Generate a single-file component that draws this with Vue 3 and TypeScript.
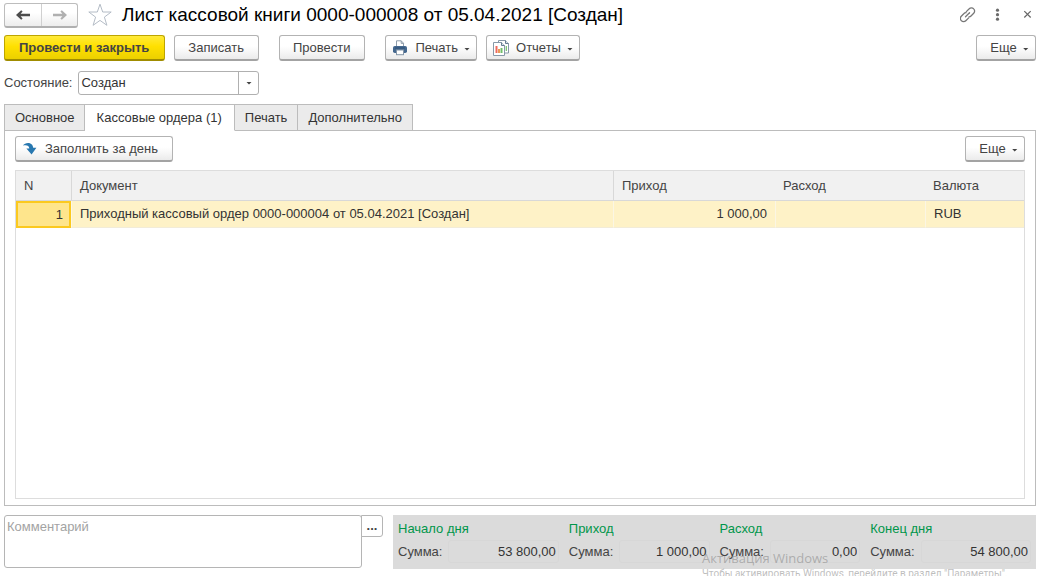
<script setup lang="ts">
import { ref } from 'vue'

interface Order {
  n: number
  document: string
  income: string
  expense: string
  currency: string
}

interface Total {
  id: string
  title: string
  amount: string
}

const tabs: string[] = ['Основное', 'Кассовые ордера (1)', 'Печать', 'Дополнительно']
const activeTab = ref(1)
const state = ref('Создан')
const comment = ref('')

const orders: Order[] = [
  {
    n: 1,
    document: 'Приходный кассовый ордер 0000-000004 от 05.04.2021 [Создан]',
    income: '1 000,00',
    expense: '',
    currency: 'RUB',
  },
]

const totals: Total[] = [
  { id: 'opening', title: 'Начало дня', amount: '53 800,00' },
  { id: 'income', title: 'Приход', amount: '1 000,00' },
  { id: 'expense', title: 'Расход', amount: '0,00' },
  { id: 'closing', title: 'Конец дня', amount: '54 800,00' },
]
</script>

<template>
  <div class="window">
    <header class="titlebar">
      <div class="nav">
        <button type="button" class="nav-btn" aria-label="Назад">
          <svg width="16" height="12" viewBox="0 0 16 12"><path d="M1 6 6.2 1.2 7.6 2.4 5.6 4.7H15V7.3H5.6L7.6 9.6 6.2 10.8z" fill="#4c4c4c" /></svg>
        </button>
        <button type="button" class="nav-btn" aria-label="Вперед">
          <svg width="16" height="12" viewBox="0 0 16 12"><path d="M15 6 9.8 1.2 8.4 2.4 10.4 4.8H1V7.2H10.4L8.4 9.6 9.8 10.8z" fill="#b0b0b0" /></svg>
        </button>
      </div>
      <button type="button" class="plain star" aria-label="Избранное">
        <svg width="24" height="24" viewBox="0 0 24 24"><path d="M12 1.2 14.7 9h8.5l-6.8 5.1 2.5 8.2L12 17.4l-6.9 4.9 2.5-8.2L.8 9h8.5z" fill="#fff" stroke="#b4bcc6" stroke-width="1" /></svg>
      </button>
      <h1>Лист кассовой книги 0000-000008 от 05.04.2021 [Создан]</h1>
      <div class="window-tools">
        <button type="button" class="plain" aria-label="Получить ссылку">
          <svg width="16" height="16" viewBox="0 0 16 16" fill="none" stroke="#777" stroke-width="1.3" stroke-linecap="round">
            <path d="M6.3 4.6 9.2 1.8a3.1 3.1 0 0 1 4.5.1 3.1 3.1 0 0 1 0 4.4L11 9a2.6 2.6 0 0 1-2 .8" />
            <path d="M8.7 10.9 5.8 13.700a3.1 3.1 0 0 1-4.500-.1 3.100 3.100 0 0 1 0-4.400L4 6.500a2.600 2.600 0 0 1 2-.8" />
            <path d="M5.500 9.700l4-4" />
          </svg>
        </button>
        <button type="button" class="plain" aria-label="Меню">
          <svg width="16" height="16" viewBox="0 0 16 16" fill="#6a6a6a"><circle cx="7.5" cy="3.2" r="1.6" /><circle cx="7.5" cy="7.700" r="1.6" /><circle cx="7.5" cy="12.2" r="1.6" /></svg>
        </button>
        <button type="button" class="plain" aria-label="Закрыть">
          <svg width="16" height="16" viewBox="0 0 16 16"><path d="M4.3 4.1l6.4 6.4M10.7 4.1l-6.4 6.4" stroke="#666" stroke-width="1.2" /></svg>
        </button>
      </div>
    </header>

    <div class="toolbar">
      <button type="button" class="btn primary">Провести и закрыть</button>
      <button type="button" class="btn">Записать</button>
      <button type="button" class="btn spaced">Провести</button>
      <button type="button" class="btn spaced with-icon">
        <svg width="16" height="16" viewBox="0 0 16 16">
          <path d="M4.5 7V.8h4.7l2.3 2.4V7" fill="#fff" stroke="#8f9dab" />
          <path d="M9.2.8v2.6h2.3" fill="none" stroke="#8f9dab" />
          <rect x="1" y="6" width="14" height="7" rx="1.8" fill="#44688f" />
          <path d="M3 8h10" stroke="#2d4e75" />
          <rect x="4.5" y="10" width="7" height="4.7" fill="#fff" stroke="#8496a8" />
        </svg>
        <span>Печать</span><i class="caret"></i>
      </button>
      <button type="button" class="btn with-icon">
        <svg width="16" height="16" viewBox="0 0 16 16">
          <path d="M5.5.5h7l3 3v9.5h-10z" fill="#fff" stroke="#8798a8" />
          <path d="M12.5.5v3h3" fill="#dce4eb" stroke="#667d91" />
          <path d="M.5 2.5h8l3 3v10H.5z" fill="#fff" stroke="#8798a8" />
          <path d="M8.5 2.5v3h3" fill="#dce4eb" stroke="#667d91" />
          <path d="M2.5 6h2v7h-2z" fill="#ee6a5e" />
          <path d="M5 9h2v4H5z" fill="#e89a58" />
          <path d="M7.5 8h2v5h-2zM12.7 6h1.2v5h-1.2z" fill="#72bf6a" />
        </svg>
        <span>Отчеты</span><i class="caret"></i>
      </button>
      <button type="button" class="btn more"><span>Еще</span><i class="caret"></i></button>
    </div>

    <div class="state-row">
      <label for="state">Состояние:</label>
      <div class="select-box">
        <select id="state" v-model="state">
          <option>Создан</option>
        </select>
        <span class="select-arrow"><i class="caret"></i></span>
      </div>
    </div>

    <div class="tabs" role="tablist">
      <button
        v-for="(tab, i) in tabs"
        :key="tab"
        type="button"
        role="tab"
        class="tab"
        :class="{ active: i === activeTab }"
        :aria-selected="i === activeTab"
        @click="activeTab = i"
      >{{ tab }}</button>
    </div>

    <main class="panel">
      <div class="panel-tools">
        <button type="button" class="btn with-icon">
          <svg width="16" height="16" viewBox="0 0 16 16"><path d="M1 4.6C2.8.9 10.8.4 11.2 6.7H14.4L9.6 13.4 4.4 7.6h2.9C7.4 4.4 4 3.6 1 4.6z" fill="#2878b0" /></svg>
          <span>Заполнить за день</span>
        </button>
        <button type="button" class="btn more"><span>Еще</span><i class="caret"></i></button>
      </div>
      <div class="grid">
        <table>
          <colgroup>
            <col class="c-n" /><col /><col class="c-income" /><col class="c-expense" /><col class="c-currency" />
          </colgroup>
          <thead>
            <tr><th>N</th><th>Документ</th><th>Приход</th><th>Расход</th><th>Валюта</th></tr>
          </thead>
          <tbody>
            <tr v-for="o in orders" :key="o.n">
              <td class="num current">{{ o.n }}</td>
              <td>{{ o.document }}</td>
              <td class="num">{{ o.income }}</td>
              <td class="num">{{ o.expense }}</td>
              <td>{{ o.currency }}</td>
            </tr>
          </tbody>
        </table>
      </div>
    </main>

    <footer class="bottom">
      <div class="comment">
        <textarea v-model="comment" placeholder="Комментарий" aria-label="Комментарий"></textarea>
        <button type="button" class="dots" aria-label="Открыть комментарий">...</button>
      </div>
      <div class="totals">
        <section v-for="t in totals" :key="t.id" class="total">
          <h2>{{ t.title }}</h2>
          <div class="total-line">
            <label :for="t.id">Сумма:</label>
            <input :id="t.id" type="text" :value="t.amount" readonly />
          </div>
        </section>
      </div>
    </footer>

    <div class="watermark">
      <p class="wm-title">Активация Windows</p>
      <p class="wm-text">Чтобы активировать Windows, перейдите в раздел "Параметры".</p>
    </div>
  </div>
</template>

<style>
body {
  margin: 0;
  background: #fff;
}
</style>

<style scoped>
.window {
  position: relative;
  box-sizing: border-box;
  display: flex;
  flex-direction: column;
  height: 100vh;
  padding: 2px 8px 8px 4px;
  overflow: hidden;
  background: #fff;
  color: #444;
  font: 13px/16px "Liberation Sans", Arial, sans-serif;
}
.window * {
  box-sizing: border-box;
}
button,
input,
select,
textarea {
  font: inherit;
  color: inherit;
  margin: 0;
}
.titlebar {
  display: flex;
  align-items: center;
  height: 26px;
  flex: none;
}
.nav {
  display: flex;
  height: 25px;
  border: 1px solid #bdbdbd;
  border-bottom: 2px solid #b0b0b0;
  border-radius: 3px;
  background: linear-gradient(#fff 40%, #ededed);
}
.nav-btn {
  display: flex;
  align-items: center;
  justify-content: center;
  width: 36px;
  padding: 0;
  border: 0;
  background: none;
}
.nav-btn + .nav-btn {
  border-left: 1px solid #d0d0d0;
}
.plain {
  display: flex;
  padding: 0;
  border: 0;
  background: none;
}
.star {
  margin: 0 10px;
}
h1 {
  flex: 1;
  margin: 0;
  font-size: 19px;
  line-height: 24px;
  font-weight: 400;
  color: #000;
  white-space: nowrap;
}
.window-tools {
  display: flex;
  gap: 14px;
}
.toolbar {
  display: flex;
  flex: none;
  gap: 9px;
  margin-top: 7px;
}
.btn {
  display: flex;
  align-items: center;
  justify-content: center;
  height: 26px;
  padding: 0 14px 0 13px;
  border: 1px solid #b3b3b3;
  border-bottom: 2px solid #a3a3a3;
  border-radius: 3px;
  background: linear-gradient(#fff 45%, #ebebeb);
  white-space: nowrap;
}
.btn.primary {
  padding: 0 15px 0 14px;
  border-color: #bda500;
  border-bottom-color: #a08c00;
  background: linear-gradient(#ffea3a, #ffe000 45%, #ecd000);
  font-weight: 700;
}
.btn.spaced {
  margin-left: 11px;
}
.btn.with-icon {
  padding: 0 6px;
}
.btn.with-icon span {
  margin-left: 7px;
}
.btn.more {
  margin-left: auto;
  width: 60px;
  padding: 0 6px 0 13px;
}
.caret {
  flex: none;
  width: 6px;
  height: 3px;
  margin-top: 3px;
  margin-left: 6px;
  background: #444;
  clip-path: polygon(0 0, 100% 0, 50% 100%);
}
.state-row {
  display: flex;
  flex: none;
  align-items: center;
  gap: 6px;
  margin-top: 10px;
}
.select-box {
  position: relative;
  width: 181px;
  height: 24px;
}
select {
  width: 100%;
  height: 100%;
  padding: 0 24px 0 2px;
  border: 1px solid #b0b0b0;
  border-radius: 3px;
  background: #fff;
  color: #333;
  appearance: none;
}
.select-arrow {
  position: absolute;
  top: 1px;
  right: 1px;
  bottom: 1px;
  display: flex;
  align-items: center;
  justify-content: center;
  width: 20px;
  border-left: 1px solid #b0b0b0;
  pointer-events: none;
}
.select-arrow .caret {
  margin: 0;
}
.tabs {
  position: relative;
  display: flex;
  flex: none;
  margin-top: 9px;
}
.tab {
  height: 27px;
  margin-bottom: -1px;
  padding: 0 10px;
  border: 1px solid #bcbcbc;
  border-left: 0;
  background: #ebebeb;
  color: #333;
}
.tab:first-child {
  padding-right: 9px;
  border-left: 1px solid #bcbcbc;
}
.tab.active {
  padding: 0 12px;
  border-bottom-color: #fff;
  background: #fff;
}
.panel {
  display: flex;
  flex: 1;
  flex-direction: column;
  min-height: 0;
  padding: 5px 10px 6px;
  border: 1px solid #bcbcbc;
}
.panel-tools {
  display: flex;
}
.panel-tools .with-icon {
  padding: 0 14px 0 6px;
}
.grid {
  flex: 1;
  margin-top: 8px;
  border: 1px solid #ddd;
  overflow: hidden;
}
table {
  width: 100%;
  table-layout: fixed;
  border-collapse: separate;
  border-spacing: 0;
}
.c-n {
  width: 55px;
}
.c-income {
  width: 162px;
}
.c-expense {
  width: 150px;
}
.c-currency {
  width: 99px;
}
th,
td {
  padding: 0 8px;
  text-align: left;
  font-weight: 400;
  white-space: nowrap;
}
th {
  height: 30px;
  border-bottom: 1px solid #d8d8d8;
  background: #f1f1f1;
}
th:nth-child(2),
th:nth-child(3) {
  border-left: 1px solid #d8d8d8;
}
td {
  height: 27px;
  border-bottom: 1px solid #f2ecd8;
  background: #fef2c7;
  color: #333;
}
td + td {
  border-left: 1px solid #fbf6e4;
}
.num {
  text-align: right;
}
td.current {
  padding-right: 6px;
  border: 2px solid #fbc91f;
  background: #fee58c;
}
.bottom {
  display: grid;
  flex: none;
  grid-template-columns: minmax(0, 379fr) minmax(0, 643fr);
  gap: 10px;
  height: 53px;
  margin-top: 9px;
}
.comment {
  display: flex;
  align-items: flex-start;
}
textarea {
  flex: 1;
  min-width: 0;
  height: 53px;
  padding: 3px 2px;
  border: 1px solid #b5b5b5;
  border-radius: 3px;
  background: #fff;
  resize: none;
}
textarea::placeholder {
  color: #a3a3a3;
  opacity: 1;
}
.dots {
  width: 22px;
  height: 22px;
  margin-left: -1px;
  padding: 0;
  border: 1px solid #b5b5b5;
  border-radius: 0 3px 3px 0;
  background: #fff;
  font-weight: 700;
}
.totals {
  display: grid;
  grid-template-columns: minmax(0, 8fr) minmax(0, 7fr) minmax(0, 7fr) minmax(0, 8fr);
  gap: 10px;
  padding: 6px 5px;
  background: #dbdbdb;
}
h2 {
  margin: 0;
  font-size: 13px;
  line-height: 16px;
  font-weight: 400;
  color: #00964a;
}
.total-line {
  display: flex;
  align-items: center;
  gap: 6px;
  margin-top: 3px;
}
.total-line input {
  flex: 1;
  min-width: 0;
  height: 23px;
  padding: 0 2px;
  border: 1px solid #d7d7d7;
  border-radius: 3px;
  background: transparent;
  color: #333;
  text-align: right;
}
.watermark {
  position: absolute;
  top: 550px;
  left: 702px;
  color: rgba(125, 125, 125, 0.5);
  font-family: "Open Sans", "Noto Sans", sans-serif;
  white-space: nowrap;
  pointer-events: none;
}
.watermark p {
  margin: 0;
}
.wm-title {
  font-size: 13px;
  line-height: 17px;
}
.wm-text {
  font-family: Roboto, sans-serif;
  font-size: 10px;
  line-height: 14px;
}
</style>
